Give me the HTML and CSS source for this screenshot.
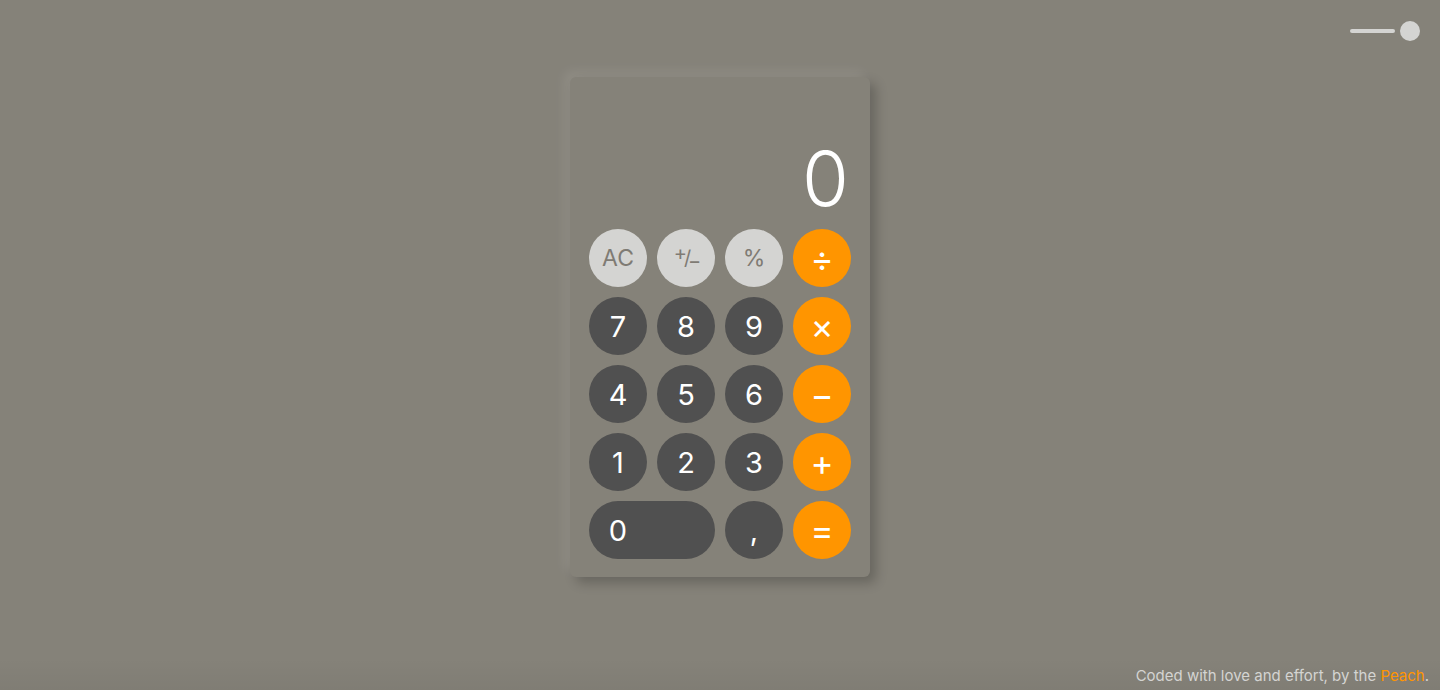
FILE: index.html
```html
<!DOCTYPE html>
<html lang="en">
<head>
<meta charset="utf-8">
<title>Calculator</title>
<link rel="stylesheet" href="styles.css">
</head>
<body>
<header class="topbar">
  <div class="toggle"><span class="toggle-track"></span><span class="toggle-knob"></span></div>
</header>
<main class="stage">
  <section class="calc">
    <div class="display">0</div>
    <div class="keys">
      <button class="key fn">AC</button>
      <button class="key fn pm"><span>+</span>/<span>−</span></button>
      <button class="key fn">%</button>
      <button class="key op">÷</button>
      <button class="key num">7</button>
      <button class="key num">8</button>
      <button class="key num">9</button>
      <button class="key op">×</button>
      <button class="key num">4</button>
      <button class="key num">5</button>
      <button class="key num">6</button>
      <button class="key op">−</button>
      <button class="key num">1</button>
      <button class="key num">2</button>
      <button class="key num">3</button>
      <button class="key op">+</button>
      <button class="key num zero"><span class="zero-label">0</span></button>
      <button class="key num">,</button>
      <button class="key op">=</button>
    </div>
  </section>
</main>
<footer class="footer">
  <p class="credit">Coded with love and effort, by the <span class="peach">Peach</span>.</p>
</footer>
</body>
</html>
```
FILE: styles.css
```css
* { box-sizing: border-box; }
html, body { margin: 0; padding: 0; }
body {
  width: 1440px;
  height: 690px;
  overflow: hidden;
  background: #858279;
  font-family: Inter, "Liberation Sans", Arial, sans-serif;
  display: flex;
  flex-direction: column;
}
.topbar {
  display: flex;
  justify-content: flex-end;
  padding: 21px 20px 0 0;
  height: 41px;
}
.toggle {
  display: flex;
  align-items: center;
  gap: 5px;
  height: 20px;
}
.toggle-track {
  width: 45px;
  height: 4px;
  border-radius: 2px;
  background: #d4d4d2;
}
.toggle-knob {
  width: 20px;
  height: 20px;
  border-radius: 50%;
  background: #d4d4d2;
}
.stage {
  display: flex;
  justify-content: center;
  padding-top: 36px;
}
.calc {
  width: 300px;
  height: 500px;
  border-radius: 6px;
  background: #858279;
  box-shadow: 6px 6px 12px rgba(0,0,0,0.22), -6px -6px 12px rgba(255,255,255,0.09);
  padding: 0 19px 18px;
  display: flex;
  flex-direction: column;
  justify-content: flex-end;
}
.display {
  color: #ffffff;
  font-family: Inter, "Liberation Sans", sans-serif;
  font-weight: 300;
  font-size: 76px;
  line-height: 76px;
  text-align: right;
  padding-right: 2px;
  margin-bottom: 13px;
}
.keys {
  display: grid;
  grid-template-columns: repeat(4, 58px);
  grid-auto-rows: 58px;
  gap: 10px;
}
.key {
  border: none;
  margin: 0;
  padding: 0;
  border-radius: 29px;
  font-family: Inter, "Liberation Sans", sans-serif;
  display: flex;
  align-items: center;
  justify-content: center;
  cursor: pointer;
}
.fn {
  background: #d4d4d2;
  color: #7f7b74;
  font-size: 23px;
  font-weight: 400;
}
.pm { font-size: 20px; letter-spacing: -3px; }
.pm span:first-child { position: relative; top: -5px; }
.pm span:last-child { position: relative; top: 3px; }
.num {
  background: #505050;
  color: #ffffff;
  font-size: 29px;
  font-weight: 400;
}
.op {
  background: #ff9500;
  color: #ffffff;
  font-size: 35px;
  font-weight: 400;
}
.zero {
  grid-column: span 2;
  justify-content: flex-start;
}
.zero-label {
  width: 58px;
  text-align: center;
}
.footer {
  margin-top: auto;
  height: 32px;
  display: flex;
  justify-content: flex-end;
  align-items: center;
  padding-right: 11px;
  background: linear-gradient(to bottom, rgba(0,0,0,0) 0%, rgba(0,0,0,0.04) 100%);
}
.credit {
  margin: 0;
  font-size: 15px;
  color: #d4d4d2;
  padding-top: 2px;
}
.peach { color: #ff9500; }
```
